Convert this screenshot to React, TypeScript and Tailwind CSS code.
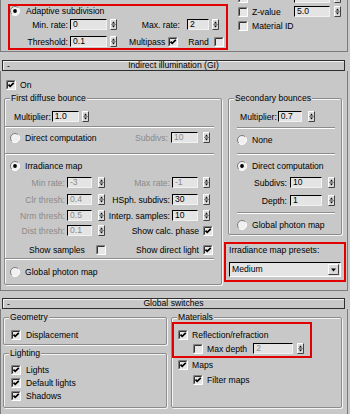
const DIS = 'text-[#8a8a8a]';

function Check({ on, className = '' }: { on?: boolean; className?: string }) {
  return (
    <svg width="10" height="10" viewBox="0 0 10 10" className={`block shrink-0 ${className}`}>
      <rect width="10" height="10" fill="#e6e6e6" />
      <path d="M0.5 9.5V0.5H9.5" stroke="#808080" fill="none" />
      <path d="M1.5 8.5V1.5H8.5" stroke="#303030" fill="none" />
      <path d="M0.5 9.5H9.5V0.5" stroke="#ffffff" fill="none" />
      {on && <path d="M2.5 4.6L4.2 6.4L7.8 2.8" stroke="#000" strokeWidth="1.7" fill="none" />}
    </svg>
  );
}

function Radio({ on, className = '' }: { on?: boolean; className?: string }) {
  return (
    <svg width="10" height="10" viewBox="0 0 10 10" className={`block shrink-0 ${className}`}>
      <circle cx="5" cy="5" r="4.5" fill="#f0f0f0" />
      <path d="M1.8 8.2A4.5 4.5 0 0 1 8.2 1.8" stroke="#7a7a7a" fill="none" />
      <path d="M8.2 1.8A4.5 4.5 0 0 1 1.8 8.2" stroke="#ffffff" fill="none" />
      {on && <circle cx="5" cy="5" r="1.9" fill="#000" />}
    </svg>
  );
}

function Arrows({ className = '' }: { className?: string }) {
  return (
    <svg width="7" height="11" viewBox="0 0 7 11" className={`block shrink-0 ${className}`}>
      <rect width="7" height="11" fill="#d8d8d8" />
      <path d="M0.5 10.5V0.5H6.5" stroke="#ffffff" fill="none" />
      <path d="M0.5 10.5H6.5V0.5" stroke="#404040" fill="none" />
      <path d="M1 5.5H6" stroke="#8a8a8a" />
      <path d="M2 4.5H5L3.5 2.5Z" fill="#000" />
      <path d="M2 6.5H5L3.5 8.5Z" fill="#000" />
    </svg>
  );
}

function Field({ value, className, disabled }: { value: string; className: string; disabled?: boolean }) {
  return (
    <div
      className={`h-[11px] shrink-0 bg-[#e4e4e4] border border-t-black border-l-black border-b-[#f2f2f2] border-r-[#f2f2f2] pl-[2px] leading-[9px] ${disabled ? DIS : 'text-black'} ${className}`}
    >
      {value}
    </div>
  );
}

function Sep({ className = '' }: { className?: string }) {
  return <div className={`h-[2px] border-t border-b border-t-[#8c8c8c] border-b-white ${className}`} />;
}

function Group({ title, className, children }: { title: string; className: string; children?: React.ReactNode }) {
  return (
    <div
      className={`relative border border-[#8c8c8c] rounded-[2px] shadow-[inset_1px_1px_0_#f4f4f4,1px_1px_0_#f4f4f4] ${className}`}
    >
      <span className="absolute -top-[6px] left-[5px] bg-[#c8c8c8] px-[1px] leading-[10px] whitespace-nowrap">
        {title}
      </span>
      {children}
    </div>
  );
}

function Header({ title, className }: { title: string; className: string }) {
  return (
    <div
      className={`ml-[2px] w-[343px] h-[11px] grid grid-cols-[14px_1fr_14px] items-center border border-[#2e2e2e] shadow-[inset_1px_1px_0_#f0f0f0] ${className}`}
    >
      <span className="pl-[4px] leading-[8px]">-</span>
      <span className="text-center leading-[9px] whitespace-nowrap">{title}</span>
      <span />
    </div>
  );
}

function IrrRow({
  mt,
  label,
  value,
  children,
}: {
  mt: string;
  label: string;
  value: string;
  children: React.ReactNode;
}) {
  return (
    <div className={`${mt} flex items-center h-[11px]`}>
      <span className={`w-[60px] text-right whitespace-nowrap ${DIS}`}>{label}</span>
      <Field value={value} disabled className="ml-[2px] w-[25px]" />
      <Arrows className="ml-[6px]" />
      {children}
    </div>
  );
}

function RightSpin({ label, value, disabled }: { label: string; value: string; disabled?: boolean }) {
  return (
    <>
      <span className={`w-[65px] text-right whitespace-nowrap ${disabled ? DIS : ''}`}>{label}</span>
      <Field value={value} disabled={disabled} className="ml-[2px] w-[26px]" />
      <Arrows className="ml-[5px]" />
    </>
  );
}

export default function App() {
  return (
    <div className="w-[350px] h-[414px] overflow-hidden bg-[#c8c8c8] text-black font-['Liberation_Sans',Arial,sans-serif] text-[8.6px] leading-[10px] flex flex-col items-start">
      {/* Top rollout, cut off above */}
      <div className="w-[348px] h-[52px] shrink-0 flex items-start border-x border-b border-[#7c7c7c]">
        <div className="ml-[7px] mt-[4px] w-[220px] h-[46px] border-2 border-[#e00000]">
          <div className="flex items-center h-[10px]">
            <Radio on />
            <span className="ml-[6px] whitespace-nowrap">Adaptive subdivision</span>
          </div>
          <div className="mt-[3px] flex items-center h-[11px]">
            <span className="w-[58px] text-right">Min. rate:</span>
            <Field value="0" className="ml-[2px] w-[37px]" />
            <Arrows className="ml-[3px]" />
            <span className="w-[63px] text-right whitespace-nowrap">Max. rate:</span>
            <Field value="2" className="ml-[7px] w-[22px]" />
            <Arrows className="ml-[3px]" />
          </div>
          <div className="mt-[6px] flex items-center h-[11px]">
            <span className="w-[58px] text-right">Threshold:</span>
            <Field value="0.1" className="ml-[2px] w-[37px]" />
            <Arrows className="ml-[3px]" />
            <span className="ml-[12px]">Multipass</span>
            <Check on className="ml-[3px]" />
            <span className="ml-[10px]">Rand</span>
            <Check className="ml-[5px]" />
          </div>
        </div>
        <div className="ml-[10px] flex flex-col">
          <div className="-mt-[8px] flex items-center h-[11px]">
            <Check />
            <span className="ml-[4px] w-[42px]" />
            <Field value="" className="w-[36px]" />
            <Arrows className="ml-[4px]" />
          </div>
          <div className="mt-[3px] flex items-center h-[11px]">
            <Check />
            <span className="ml-[4px] w-[42px]">Z-value</span>
            <Field value="5.0" className="w-[36px]" />
            <Arrows className="ml-[4px]" />
          </div>
          <div className="mt-[4px] flex items-center h-[10px]">
            <Check />
            <span className="ml-[4px] whitespace-nowrap">Material ID</span>
          </div>
        </div>
      </div>

      <Header title="Indirect illumination (GI)" className="mt-[8px]" />

      {/* Indirect illumination body */}
      <div className="w-[348px] h-[220px] shrink-0 flex flex-col items-start border-x border-b border-[#7c7c7c]">
        <div className="mt-[9px] ml-[5px] flex items-center h-[10px]">
          <Check on />
          <span className="ml-[4px]">On</span>
        </div>
        <div className="mt-[8px] flex items-start">
          <Group title="First diffuse bounce" className="ml-[3px] w-[218px] h-[187px]">
            <div className="mt-[12px] ml-[9px] flex items-center h-[11px]">
              <span>Multiplier:</span>
              <Field value="1.0" className="ml-[1px] w-[27px]" />
              <Arrows className="ml-[3px]" />
            </div>
            <Sep className="mt-[4px] mr-[7px]" />
            <div className="mt-[4px] flex items-center h-[11px] pr-[11px]">
              <Radio className="ml-[5px]" />
              <span className="ml-[5px] whitespace-nowrap">Direct computation</span>
              <span className={`ml-auto ${DIS}`}>Subdivs:</span>
              <Field value="10" disabled className="ml-[3px] w-[27px]" />
              <Arrows className="ml-[5px]" />
            </div>
            <Sep className="mt-[10px] mr-[7px]" />
            <div className="mt-[5px] flex items-center h-[11px]">
              <Radio on className="ml-[5px]" />
              <span className="ml-[5px] whitespace-nowrap">Irradiance map</span>
            </div>
            <IrrRow mt="mt-[6px]" label="Min rate:" value="-3">
              <RightSpin label="Max rate:" value="-1" disabled />
            </IrrRow>
            <IrrRow mt="mt-[6px]" label="Clr thresh:" value="0.4">
              <RightSpin label="HSph. subdivs:" value="30" />
            </IrrRow>
            <IrrRow mt="mt-[5px]" label="Nrm thresh:" value="0.5">
              <RightSpin label="Interp. samples:" value="10" />
            </IrrRow>
            <IrrRow mt="mt-[4px]" label="Dist thresh:" value="0.1">
              <span className="ml-auto whitespace-nowrap">Show calc. phase</span>
              <Check on className="ml-[4px] mr-[8px]" />
            </IrrRow>
            <div className="mt-[8px] flex items-center h-[11px]">
              <span className="ml-[24px] whitespace-nowrap">Show samples</span>
              <Check className="ml-[11px]" />
              <span className="ml-auto whitespace-nowrap">Show direct light</span>
              <Check on className="ml-[4px] mr-[8px]" />
            </div>
            <Sep className="mt-[3px] mr-[7px]" />
            <div className="mt-[6px] flex items-center h-[11px]">
              <Radio className="ml-[5px]" />
              <span className="ml-[5px] whitespace-nowrap">Global photon map</span>
            </div>
          </Group>

          <div className="ml-[2px] w-[122px]">
            <Group title="Secondary bounces" className="ml-[4px] w-[114px] h-[137px]">
              <div className="mt-[12px] ml-[11px] flex items-center h-[11px]">
                <span>Multiplier:</span>
                <Field value="0.7" className="ml-[1px] w-[24px]" />
                <Arrows className="ml-[6px]" />
              </div>
              <Sep className="mt-[5px] ml-[8px] mr-[6px]" />
              <div className="mt-[5px] flex items-center h-[11px]">
                <Radio className="ml-[8px]" />
                <span className="ml-[5px]">None</span>
              </div>
              <Sep className="mt-[8px] ml-[8px] mr-[6px]" />
              <div className="mt-[5px] flex items-center h-[11px]">
                <Radio on className="ml-[8px]" />
                <span className="ml-[5px] whitespace-nowrap">Direct computation</span>
              </div>
              <div className="mt-[6px] flex items-center h-[11px]">
                <span className="w-[58px] text-right">Subdivs:</span>
                <Field value="10" className="ml-[3px] w-[32px]" />
                <Arrows className="ml-[6px]" />
              </div>
              <div className="mt-[7px] flex items-center h-[11px]">
                <span className="w-[58px] text-right">Depth:</span>
                <Field value="1" className="ml-[3px] w-[32px]" />
                <Arrows className="ml-[6px]" />
              </div>
              <Sep className="mt-[6px] ml-[8px] mr-[6px]" />
              <div className="mt-[5px] flex items-center h-[11px]">
                <Radio className="ml-[8px]" />
                <span className="ml-[5px] whitespace-nowrap">Global photon map</span>
              </div>
            </Group>

            <div className="mt-[7px] h-[40px] border-2 border-[#e00000]">
              <div className="mt-[1px] ml-[3px] whitespace-nowrap">Irradiance map presets:</div>
              <div className="mt-[7px] ml-[3px] w-[112px] h-[15px] flex items-center bg-[#e4e4e4] border border-t-black border-l-black border-b-white border-r-white">
                <span className="flex-1 pl-[2px] leading-[13px]">Medium</span>
                <svg width="11" height="11" viewBox="0 0 11 11" className="block mr-[1px]">
                  <rect width="11" height="11" fill="#d8d8d8" />
                  <path d="M0.5 10.5V0.5H10.5" stroke="#ffffff" fill="none" />
                  <path d="M0.5 10.5H10.5V0.5" stroke="#404040" fill="none" />
                  <path d="M3 4.5H8L5.5 7.5Z" fill="#000" />
                </svg>
              </div>
            </div>
          </div>
        </div>
      </div>

      <Header title="Global switches" className="mt-[7px]" />

      {/* Global switches body */}
      <div className="w-[348px] h-[105px] shrink-0 flex items-start border-x border-[#7c7c7c]">
        <div className="ml-[2px] mt-[8px] flex flex-col">
          <Group title="Geometry" className="w-[164px] h-[28px]">
            <div className="mt-[12px] ml-[7px] flex items-center h-[10px]">
              <Check on />
              <span className="ml-[5px]">Displacement</span>
            </div>
          </Group>
          <Group title="Lighting" className="mt-[8px] w-[164px] h-[55px]">
            <div className="mt-[11px] ml-[7px] flex items-center h-[10px]">
              <Check on />
              <span className="ml-[5px]">Lights</span>
            </div>
            <div className="mt-[3px] ml-[7px] flex items-center h-[10px]">
              <Check on />
              <span className="ml-[5px] whitespace-nowrap">Default lights</span>
            </div>
            <div className="mt-[3px] ml-[7px] flex items-center h-[10px]">
              <Check on />
              <span className="ml-[5px]">Shadows</span>
            </div>
          </Group>
        </div>
        <Group title="Materials" className="ml-[4px] mt-[8px] w-[171px] h-[91px]">
          <div className="mt-[4px] w-[140px] h-[36px] border-2 border-[#e00000]">
            <div className="mt-[6px] ml-[4px] flex items-center h-[10px]">
              <Check on />
              <span className="ml-[4px] whitespace-nowrap">Reflection/refraction</span>
            </div>
            <div className="mt-[3px] flex items-center h-[11px]">
              <Check className="ml-[19px]" />
              <span className="ml-[4px] whitespace-nowrap">Max depth</span>
              <Field value="2" disabled className="ml-[6px] w-[40px]" />
              <Arrows className="ml-[4px]" />
            </div>
          </div>
          <div className="mt-[2px] ml-[6px] flex items-center h-[10px]">
            <Check on />
            <span className="ml-[4px]">Maps</span>
          </div>
          <div className="mt-[5px] ml-[21px] flex items-center h-[10px]">
            <Check on />
            <span className="ml-[4px] whitespace-nowrap">Filter maps</span>
          </div>
        </Group>
      </div>
    </div>
  );
}
